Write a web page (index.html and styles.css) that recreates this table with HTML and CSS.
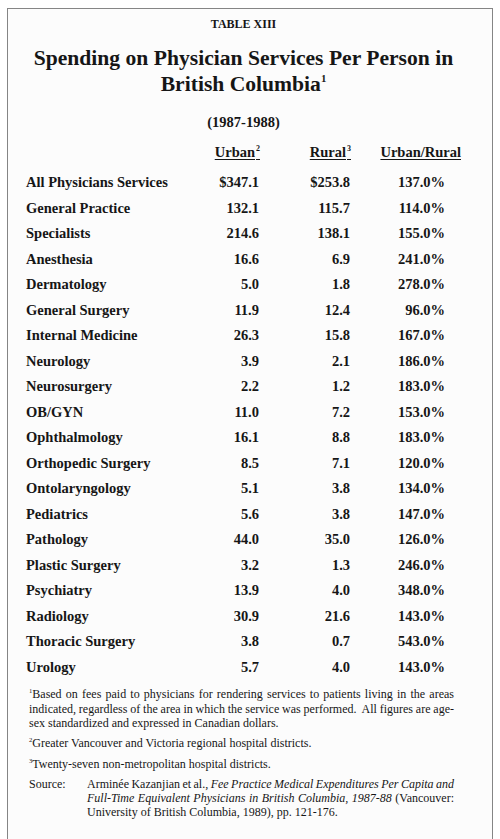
FILE: index.html
```html
<!DOCTYPE html>
<html>
<head>
<meta charset="utf-8">
<link rel="stylesheet" href="styles.css">
</head>
<body>
<div class="sheet">
  <p class="label">TABLE XIII</p>
  <h1 class="title">Spending on Physician Services Per Person in<br>British Columbia<span class="tsup">1</span></h1>
  <p class="years">(1987-1988)</p>

  <div class="row head">
    <span></span>
    <span class="hc">Urban<span class="hsup">2</span></span>
    <span class="hc">Rural<span class="hsup">3</span></span>
    <span class="hc">Urban/Rural</span>
  </div>
  <div class="rows">
    <div class="row"><span>All Physicians Services</span><span class="n">$347.1</span><span class="n">$253.8</span><span class="n r">137.0%</span></div>
    <div class="row"><span>General Practice</span><span class="n">132.1</span><span class="n">115.7</span><span class="n r">114.0%</span></div>
    <div class="row"><span>Specialists</span><span class="n">214.6</span><span class="n">138.1</span><span class="n r">155.0%</span></div>
    <div class="row"><span>Anesthesia</span><span class="n">16.6</span><span class="n">6.9</span><span class="n r">241.0%</span></div>
    <div class="row"><span>Dermatology</span><span class="n">5.0</span><span class="n">1.8</span><span class="n r">278.0%</span></div>
    <div class="row"><span>General Surgery</span><span class="n">11.9</span><span class="n">12.4</span><span class="n r">96.0%</span></div>
    <div class="row"><span>Internal Medicine</span><span class="n">26.3</span><span class="n">15.8</span><span class="n r">167.0%</span></div>
    <div class="row"><span>Neurology</span><span class="n">3.9</span><span class="n">2.1</span><span class="n r">186.0%</span></div>
    <div class="row"><span>Neurosurgery</span><span class="n">2.2</span><span class="n">1.2</span><span class="n r">183.0%</span></div>
    <div class="row"><span>OB/GYN</span><span class="n">11.0</span><span class="n">7.2</span><span class="n r">153.0%</span></div>
    <div class="row"><span>Ophthalmology</span><span class="n">16.1</span><span class="n">8.8</span><span class="n r">183.0%</span></div>
    <div class="row"><span>Orthopedic Surgery</span><span class="n">8.5</span><span class="n">7.1</span><span class="n r">120.0%</span></div>
    <div class="row"><span>Ontolaryngology</span><span class="n">5.1</span><span class="n">3.8</span><span class="n r">134.0%</span></div>
    <div class="row"><span>Pediatrics</span><span class="n">5.6</span><span class="n">3.8</span><span class="n r">147.0%</span></div>
    <div class="row"><span>Pathology</span><span class="n">44.0</span><span class="n">35.0</span><span class="n r">126.0%</span></div>
    <div class="row"><span>Plastic Surgery</span><span class="n">3.2</span><span class="n">1.3</span><span class="n r">246.0%</span></div>
    <div class="row"><span>Psychiatry</span><span class="n">13.9</span><span class="n">4.0</span><span class="n r">348.0%</span></div>
    <div class="row"><span>Radiology</span><span class="n">30.9</span><span class="n">21.6</span><span class="n r">143.0%</span></div>
    <div class="row"><span>Thoracic Surgery</span><span class="n">3.8</span><span class="n">0.7</span><span class="n r">543.0%</span></div>
    <div class="row"><span>Urology</span><span class="n">5.7</span><span class="n">4.0</span><span class="n r">143.0%</span></div>
  </div>

  <div class="notes">
    <p class="note">
      <span class="jl"><span class="fsup">1</span>Based on fees paid to physicians for rendering services to patients living in the areas</span>
      <span class="jl">indicated, regardless of the area in which the service was performed.&nbsp; All figures are age-</span>
      <span class="ln">sex standardized and expressed in Canadian dollars.</span>
    </p>
    <p class="note"><span class="fsup">2</span>Greater Vancouver and Victoria regional hospital districts.</p>
    <p class="note"><span class="fsup">3</span>Twenty-seven non-metropolitan hospital districts.</p>
    <div class="source">
      <span class="src-label">Source:</span>
      <div class="src-text">
        <span class="jl">Arminée Kazanjian et al., <i>Fee Practice Medical Expenditures Per Capita and</i></span>
        <span class="jl"><i>Full-Time Equivalent Physicians in British Columbia, 1987-88</i> (Vancouver:</span>
        <span class="ln">University of British Columbia, 1989), pp. 121-176.</span>
      </div>
    </div>
  </div>
</div>
</body>
</html>
```

FILE: styles.css
```css
html, body {
  margin: 0;
  padding: 0;
  background: #ffffff;
}

body {
  padding: 8px 7px 6px 7px;
  font-family: "Liberation Serif", "Times New Roman", serif;
  color: #161616;
}

.sheet {
  border: 1px solid #858585;
  background: #fcfcfc;
  padding: 8px 31px 21px 18px;
}

.label {
  margin: 0;
  font-size: 12px;
  line-height: 14px;
  font-weight: bold;
  text-align: center;
}

.title {
  margin: 13.7px 0 0 0;
  font-size: 21.6px;
  line-height: 26px;
  font-weight: bold;
  text-align: center;
}

.tsup {
  font-size: 0.5em;
  line-height: 0;
  vertical-align: 0.85em;
}

.years {
  margin: 16.4px 0 0 0;
  font-size: 14.5px;
  line-height: 18px;
  font-weight: bold;
  text-align: center;
}

.row {
  display: grid;
  grid-template-columns: 160px 74px 91px 110px;
  font-size: 14.5px;
  font-weight: bold;
  line-height: 25.5px;
}

.row.head {
  margin-top: 12px;
  line-height: 18px;
}

.rows {
  margin-top: 9.3px;
}

.hc {
  text-align: right;
  text-decoration: underline;
  text-decoration-thickness: 1px;
  text-underline-offset: 2px;
}

.hsup {
  font-size: 0.55em;
  line-height: 0;
  vertical-align: 0.8em;
  margin-left: 1px;
}

.n {
  text-align: right;
  padding-right: 1px;
}

.n.r {
  padding-right: 16px;
}

.notes {
  margin: 7px 7px 0 3px;
  font-size: 12px;
  line-height: 14.3px;
}

.note {
  margin: 0 0 6px 0;
}

.jl {
  display: block;
  white-space: nowrap;
  word-spacing: -1px;
  text-align: justify;
  text-align-last: justify;
}

.ln {
  display: block;
}

.fsup {
  font-size: 0.55em;
  line-height: 0;
  vertical-align: 0.7em;
}

.source {
  display: flex;
}

.src-label {
  width: 58px;
  flex: none;
}

.src-text {
  flex: 1;
  min-width: 0;
}
```
